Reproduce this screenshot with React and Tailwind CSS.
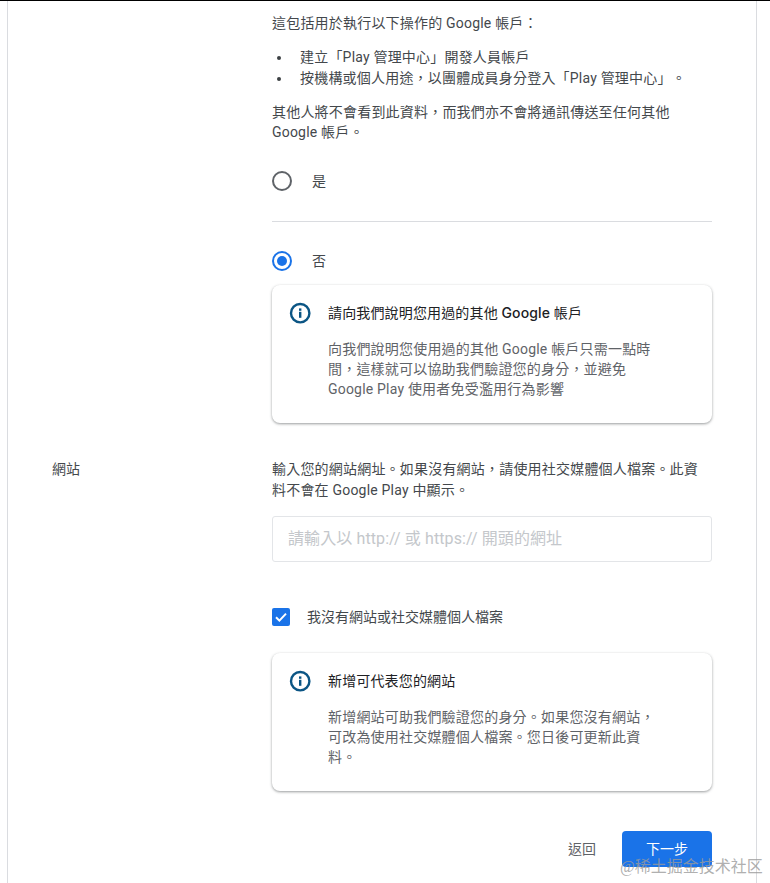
import React from "react";

const C = "\uFF0C";
const CO = "\uFF1A";

function Info() {
  return (
    <svg width="24" height="24" viewBox="0 0 24 24" className="shrink-0">
      <circle cx="12.2" cy="12.2" r="9.2" fill="none" stroke="#0b5584" strokeWidth="2.4" />
      <rect x="11" y="10.8" width="2.4" height="6" fill="#0b5584" />
      <rect x="11" y="7.4" width="2.4" height="2.4" fill="#0b5584" />
    </svg>
  );
}

function Card({ title, children }) {
  return (
    <div className="h-[138px] w-[440px] rounded-lg bg-white shadow-[0_1px_3px_rgba(60,64,67,0.4),0_1px_2px_rgba(60,64,67,0.15)] pl-[16px] pr-[54px] pt-[16px] flex gap-[16px]">
      <Info />
      <div className="flex-1 min-w-0">
        <div className="text-[14px] leading-[24px] text-[#202124] tracking-[0.15px]">{title}</div>
        <div className="mt-[14px] text-[14px] leading-[20px] text-[#5f6368] tracking-[0.2px]">{children}</div>
      </div>
    </div>
  );
}

function Bullet({ children }) {
  return (
    <li className="flex h-[21px] items-center">
      <span className="ml-[5px] mr-[19px] h-[4px] w-[4px] rounded-full bg-[#3c4043]" />
      <span>{children}</span>
    </li>
  );
}

export default function App() {
  return (
    <div lang="zh-Hant" className="relative h-[883px] w-[770px] overflow-hidden bg-white border-t border-black font-['Roboto','Noto_Sans_CJK_TC',sans-serif] text-[14px] text-[#44484c] [text-spacing-trim:space-all]">
      <div className="ml-[7px] h-full w-[750px] border-x border-[#dadce0] pl-[44px] pr-[44px] flex">
        <div className="w-[220px] shrink-0 pt-[458px] leading-[20px]">網站</div>
        <div className="w-[440px] shrink-0">
          <p className="pt-[12px] leading-[20px] tracking-[0.2px]">{"這包括用於執行以下操作的 Google 帳戶" + CO}</p>
          <ul className="mt-[14px] tracking-[0.2px]">
            <Bullet>建立「Play 管理中心」開發人員帳戶</Bullet>
            <Bullet>{"按機構或個人用途" + C + "以團體成員身分登入「Play 管理中心」。"}</Bullet>
          </ul>
          <p className="mt-[13px] leading-[20px] tracking-[0.2px]">{"其他人將不會看到此資料" + C + "而我們亦不會將通訊傳送至任何其他"}<br />Google 帳戶。</p>

          <div className="mt-[29px] flex h-[20px] items-center gap-[20px]">
            <span className="box-border h-[20px] w-[20px] rounded-full border-2 border-[#5f6368]" />
            <span>是</span>
          </div>
          <div className="mt-[30px] h-px bg-[#dadce0]" />
          <div className="mt-[29px] flex h-[20px] items-center gap-[20px]">
            <span className="box-border flex h-[20px] w-[20px] items-center justify-center rounded-full border-2 border-[#1a73e8]">
              <span className="h-[10px] w-[10px] rounded-full bg-[#1a73e8]" />
            </span>
            <span>否</span>
          </div>
          <div className="mt-[14px]">
            <Card title={<>請向我們說明您用過的其他 <span className="font-['Inter'] font-medium">Google</span> 帳戶</>}>
              {"向我們說明您使用過的其他 Google 帳戶只需一點時間" + C + "這樣就可以協助我們驗證您的身分" + C + "並避免 Google Play 使用者免受濫用行為影響"}
            </Card>
          </div>

          <p className="mt-[36px] leading-[21px] tracking-[0.2px]">{"輸入您的網站網址。如果沒有網站" + C + "請使用社交媒體個人檔案。此資料不會在 Google Play 中顯示。"}</p>
          <div className="mt-[15px] flex h-[46px] items-center rounded-[3px] border border-[#e3e5e8] pl-[15px] pr-[16px] text-[16px] tracking-[0.1px] text-[#c4c7cb]">
            請輸入以 http:// 或 https:// 開頭的網址
          </div>
          <div className="mt-[45px] flex h-[20px] items-center gap-[17px]">
            <span className="flex h-[18px] w-[18px] items-center justify-center rounded-[2px] bg-[#1a73e8]">
              <svg width="14" height="14" viewBox="0 0 14 14">
                <path d="M2 7.2 L5.4 10.6 L12 3.6" fill="none" stroke="#fff" strokeWidth="2" />
              </svg>
            </span>
            <span>我沒有網站或社交媒體個人檔案</span>
          </div>
          <div className="mt-[26px]">
            <Card title="新增可代表您的網站">
              {"新增網站可助我們驗證您的身分。如果您沒有網站" + C + "可改為使用社交媒體個人檔案。您日後可更新此資料。"}
            </Card>
          </div>
          <div className="mt-[40px] flex items-center justify-end">
            <span className="mr-[26px] text-[#5f6368]">返回</span>
            <button className="h-[36px] w-[90px] rounded-[4px] bg-[#1a73e8] text-white">下一步</button>
          </div>
        </div>
      </div>
      <div lang="zh-Hans" className="absolute left-[620px] top-[856px] whitespace-nowrap font-['Liberation_Serif','Noto_Sans_CJK_SC',serif] text-[16px] leading-[20px] text-[#9a9a9a]/80">
        @稀土掘金技术社区
      </div>
    </div>
  );
}
